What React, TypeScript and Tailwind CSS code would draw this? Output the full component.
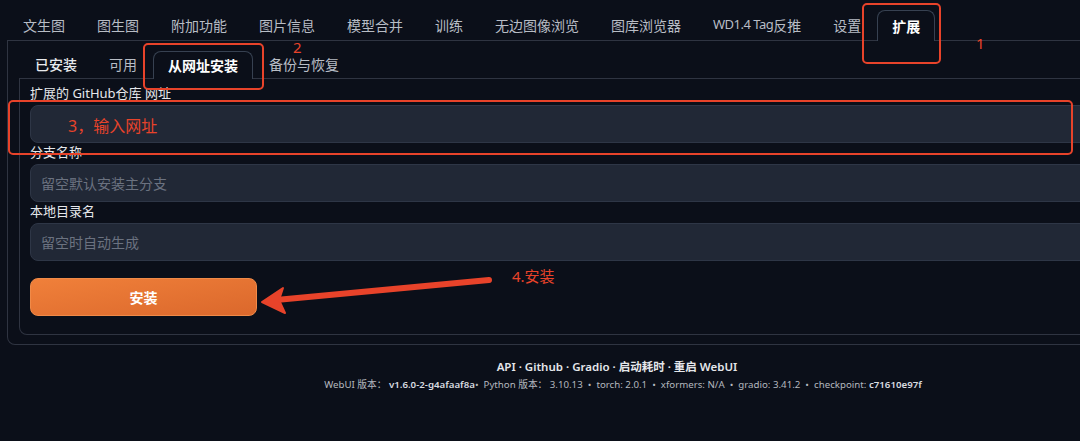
import React from "react";

const topTabs = [
  "文生图",
  "图生图",
  "附加功能",
  "图片信息",
  "模型合并",
  "训练",
  "无边图像浏览",
  "图库浏览器",
];

const subTabs = ["已安装", "可用", "从网址安装", "备份与恢复"];

function Field({ label, placeholder }: { label: string; placeholder: string }) {
  return (
    <div className="flex flex-col">
      <span className="mb-[4px] text-[13px] leading-[16px] text-[#e5e7eb]">{label}</span>
      <input
        readOnly
        placeholder={placeholder}
        className="h-[38px] w-full rounded-lg border border-[#2e3646] bg-[#212836] px-[10px] text-[14px] text-white outline-none placeholder:text-[#6b7280]"
      />
    </div>
  );
}

function Annotations() {
  const red = "#e8432a";
  return (
    <>
      <div className="pointer-events-none absolute left-[862px] top-[3px] h-[61px] w-[79px] rounded-[5px] border-2 border-[#e8432a]" />
      <span className="absolute left-[976px] top-[33px] text-[15px] leading-[20px] text-[#e8432a]">1</span>
      <div className="pointer-events-none absolute left-[143px] top-[43px] h-[47px] w-[121px] rounded-[5px] border-2 border-[#e8432a]" />
      <span className="absolute left-[293px] top-[37px] text-[15px] leading-[20px] text-[#e8432a]">2</span>
      <div className="pointer-events-none absolute left-[8px] top-[100px] h-[55px] w-[1065px] rounded-[5px] border-2 border-[#e8432a]" />
      <span className="absolute left-[68px] top-[115px] text-[16px] leading-[22px] text-[#e8432a]">3，输入网址</span>
      <span className="absolute left-[512px] top-[266px] text-[15px] leading-[20px] text-[#e8432a]">4.安装</span>
      <svg className="pointer-events-none absolute left-0 top-0" width="1080" height="441" viewBox="0 0 1080 441">
        <line x1="489" y1="280" x2="276" y2="300" stroke={red} strokeWidth="6" strokeLinecap="round" />
        <polygon points="262,302 283,288 279,300 285,313" fill={red} stroke={red} strokeWidth="2" strokeLinejoin="round" />
      </svg>
    </>
  );
}

export default function App() {
  return (
    <div
      className="relative h-[441px] w-[1080px] overflow-hidden bg-[#0b0f19]"
      style={{ fontFamily: '"Noto Sans", "Noto Sans CJK SC", sans-serif' }}
    >
      <div className="w-[1246px] px-[7px] pt-[10px]">
        <div className="flex h-[31px] border-b border-[#2f3441]">
          {topTabs.map((t) => (
            <div key={t} className="flex h-[30px] items-center px-[16px] text-[14px] text-[#b8bdc5]">
              {t}
            </div>
          ))}
          <div className="flex h-[30px] items-center px-[16px] text-[14px] text-[#b8bdc5]">
            <span className="text-[13px] tracking-[-0.5px]">WD1.4 Tag</span>反推
          </div>
          <div className="flex h-[30px] items-center px-[16px] text-[14px] text-[#b8bdc5]">设置</div>
          <div className="-mb-px flex h-[31px] items-center rounded-t-lg border border-b-0 border-[#374151] bg-[#0b0f19] px-[14px] text-[14px] font-semibold text-white">
            扩展
          </div>
        </div>

        <div className="rounded-b-lg border-x border-b border-[#2f3441] px-[11px] pb-[9px] pt-[10px]">
          <div className="flex h-[28px] border-b border-[#2f3441]">
            {subTabs.map((t) =>
              t === "从网址安装" ? (
                <div
                  key={t}
                  className="-mb-px flex h-[28px] items-center rounded-t-lg border border-b-0 border-[#374151] bg-[#0b0f19] px-[14px] text-[14px] font-semibold text-white"
                >
                  {t}
                </div>
              ) : (
                <div
                  key={t}
                  className={`flex h-[27px] items-center px-[16px] text-[14px] ${
                    t === "已安装" ? "font-medium text-[#e8eaed]" : "text-[#b8bdc5]"
                  }`}
                >
                  {t}
                </div>
              ),
            )}
          </div>

          <div className="rounded-b-lg border-x border-b border-[#2f3441] px-[10px] pb-[18px] pt-[6px]">
            <div className="flex flex-col gap-[1px]">
              <Field label="扩展的 GitHub仓库 网址" placeholder="" />
              <Field label="分支名称" placeholder="留空默认安装主分支" />
              <Field label="本地目录名" placeholder="留空时自动生成" />
            </div>
            <button
              type="button"
              className="mt-[17px] flex h-[38px] w-[227px] items-center justify-center rounded-lg border border-[#f08a48] bg-gradient-to-br from-[#f0803a] to-[#db682c] text-[14px] font-bold text-white"
            >
              安装
            </button>
          </div>
        </div>

        <div className="mt-[14px] flex flex-col items-center">
          <div className="pr-[12px] text-[11.5px] font-semibold leading-[16px] text-[#e5e7eb]">
            API · Github · Gradio · 启动耗时 · 重启 WebUI
          </div>
          <div className="mt-[3px] whitespace-pre text-[9.7px] leading-[14px] text-[#b4b8bf]">
            WebUI 版本： <b className="font-semibold text-[#d9dce0]">v1.6.0-2-g4afaaf8a</b>•  Python 版本： 3.10.13  •  torch: 2.0.1  •  xformers: N/A  •  gradio: 3.41.2  •  checkpoint: <b className="font-semibold text-[#d9dce0]">c71610e97f</b>
          </div>
        </div>
      </div>
      <Annotations />
    </div>
  );
}
